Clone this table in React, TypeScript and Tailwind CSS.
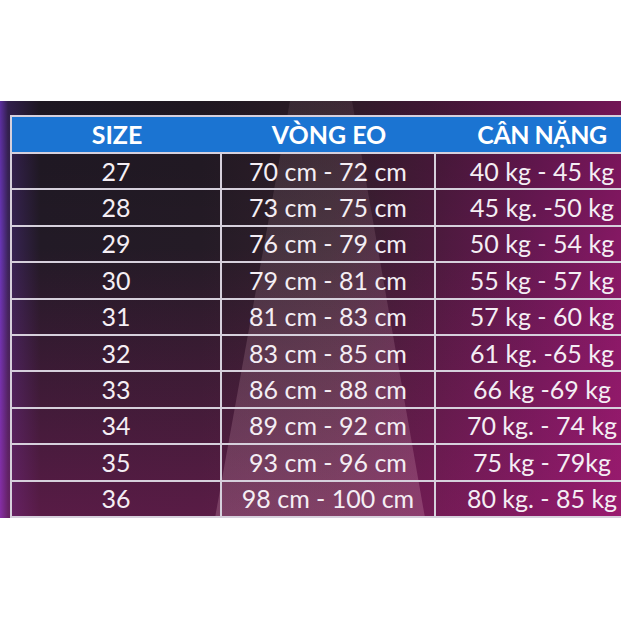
import React from "react";

const rows: [string, string, string][] = [
  ["27", "70 cm - 72 cm", "40 kg - 45 kg"],
  ["28", "73 cm - 75 cm", "45 kg. -50 kg"],
  ["29", "76 cm - 79 cm", "50 kg - 54 kg"],
  ["30", "79 cm - 81 cm", "55 kg - 57 kg"],
  ["31", "81 cm - 83 cm", "57 kg - 60 kg"],
  ["32", "83 cm - 85 cm", "61 kg. -65 kg"],
  ["33", "86 cm - 88 cm", "66 kg -69 kg"],
  ["34", "89 cm - 92 cm", "70 kg. - 74 kg"],
  ["35", "93 cm - 96 cm", "75 kg - 79kg"],
  ["36", "98 cm - 100 cm", "80 kg. - 85 kg"],
];

export default function App() {
  return (
    <div className="w-[621px] h-[621px] bg-white pt-[101px] overflow-hidden" style={{ fontFamily: "Lato, 'Open Sans', sans-serif" }}>
      <div className="relative h-[417px] w-full overflow-hidden bg-[linear-gradient(90deg,#6a36b8_0px,#3a2458_8px,#221a26_40px,#241b26_200px,#33202c_330px,#4a1a3c_430px,#6a1854_540px,#861864_621px)] pl-[10px] pt-[14px]">
        <div className="absolute inset-0 bg-[linear-gradient(180deg,rgba(0,0,0,0.15)_0%,rgba(0,0,0,0)_35%,rgba(190,30,130,0.35)_100%)]" />
        <div className="absolute inset-0 [clip-path:polygon(290px_0,352px_0,425px_417px,215px_417px)] bg-[linear-gradient(180deg,rgba(255,210,225,0.08),rgba(255,200,220,0.2))]" />
        <div className="relative w-[640px] border-t-2 border-l-2 border-[#d6d0dc]">
          <div className="grid grid-cols-[210px_214px_212px] h-[37px] bg-[#1b74d2] text-white font-bold text-[25px] leading-none items-center border-b-2 border-[#d6d0dc]">
            <div className="text-center">SIZE</div>
            <div className="text-center">VÒNG EO</div>
            <div className="text-center tracking-[-0.5px]">CÂN NẶNG</div>
          </div>
          {rows.map((r, i) => (
            <div
              key={i}
              className="grid grid-cols-[210px_214px_212px] h-[36.4px] text-[#f4eef4] text-[25px] leading-none items-center border-b-2 border-[#d6d0dc]"
            >
              <div className="text-center h-full flex items-center justify-center border-r-2 border-[#d6d0dc]">{r[0]}</div>
              <div className="text-center h-full flex items-center justify-center border-r-2 border-[#d6d0dc]">{r[1]}</div>
              <div className="text-center h-full flex items-center justify-center">{r[2]}</div>
            </div>
          ))}
        </div>
      </div>
    </div>
  );
}
